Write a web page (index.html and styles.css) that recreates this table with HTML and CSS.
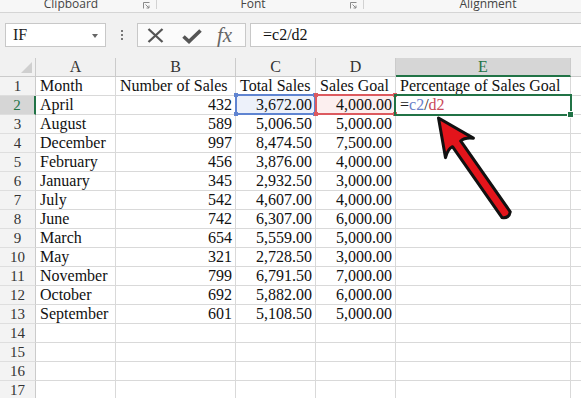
FILE: index.html
```html
<!DOCTYPE html>
<html>
<head>
<meta charset="utf-8">
<link rel="stylesheet" href="styles.css">
</head>
<body>
<div class="ribbon">
  <div class="grp g1"><span class="lbl">Clipboard</span><svg class="launch" width="7" height="7" viewBox="0 0 7 7"><path d="M0.5 6.5V0.5H6.5" fill="none" stroke="#8a8a8a"/><path d="M2.5 2.5L6 6M6 3.5V6H3.5" fill="none" stroke="#8a8a8a"/></svg></div>
  <div class="grp g2"><span class="lbl">Font</span><svg class="launch" width="7" height="7" viewBox="0 0 7 7"><path d="M0.5 6.5V0.5H6.5" fill="none" stroke="#8a8a8a"/><path d="M2.5 2.5L6 6M6 3.5V6H3.5" fill="none" stroke="#8a8a8a"/></svg></div>
  <div class="grp g3"><span class="lbl">Alignment</span></div>
</div>
<div class="fbar">
  <div class="namebox"><span>IF</span><span class="caret"></span></div>
  <div class="dots"><i></i><i></i><i></i></div>
  <div class="fxbox">
    <svg class="ic-x" width="17" height="15" viewBox="0 0 17 15"><path d="M1.5 1L15.5 14M15.5 1L1.5 14" stroke="#555" stroke-width="2.3" fill="none"/></svg>
    <svg class="ic-ok" width="20" height="15" viewBox="0 0 20 15"><path d="M1.5 7.5L7 12.5L18.5 1.5" stroke="#555" stroke-width="3.6" fill="none"/></svg>
    <span class="fx">fx</span>
  </div>
  <div class="finput">=c2/d2</div>
</div>
<div class="sheet">
  <div class="c h corner"><span class="tri"></span></div><div class="c h">A</div><div class="c h">B</div><div class="c h">C</div><div class="c h">D</div><div class="c h sel-col">E</div><div class="c h"></div>
  <div class="c rh">1</div><div class="c">Month</div><div class="c">Number of Sales</div><div class="c">Total Sales</div><div class="c">Sales Goal</div><div class="c">Percentage of Sales Goal</div><div class="c"></div>
  <div class="c rh sel-row">2</div><div class="c">April</div><div class="c n">432</div><div class="c n ref-c">3,672.00</div><div class="c n ref-d">4,000.00</div><div class="c formula">=<span class="fc">c2</span>/<span class="fd">d2</span></div><div class="c"></div>
  <div class="c rh">3</div><div class="c">August</div><div class="c n">589</div><div class="c n">5,006.50</div><div class="c n">5,000.00</div><div class="c"></div><div class="c"></div>
  <div class="c rh">4</div><div class="c">December</div><div class="c n">997</div><div class="c n">8,474.50</div><div class="c n">7,500.00</div><div class="c"></div><div class="c"></div>
  <div class="c rh">5</div><div class="c">February</div><div class="c n">456</div><div class="c n">3,876.00</div><div class="c n">4,000.00</div><div class="c"></div><div class="c"></div>
  <div class="c rh">6</div><div class="c">January</div><div class="c n">345</div><div class="c n">2,932.50</div><div class="c n">3,000.00</div><div class="c"></div><div class="c"></div>
  <div class="c rh">7</div><div class="c">July</div><div class="c n">542</div><div class="c n">4,607.00</div><div class="c n">4,000.00</div><div class="c"></div><div class="c"></div>
  <div class="c rh">8</div><div class="c">June</div><div class="c n">742</div><div class="c n">6,307.00</div><div class="c n">6,000.00</div><div class="c"></div><div class="c"></div>
  <div class="c rh">9</div><div class="c">March</div><div class="c n">654</div><div class="c n">5,559.00</div><div class="c n">5,000.00</div><div class="c"></div><div class="c"></div>
  <div class="c rh">10</div><div class="c">May</div><div class="c n">321</div><div class="c n">2,728.50</div><div class="c n">3,000.00</div><div class="c"></div><div class="c"></div>
  <div class="c rh">11</div><div class="c">November</div><div class="c n">799</div><div class="c n">6,791.50</div><div class="c n">7,000.00</div><div class="c"></div><div class="c"></div>
  <div class="c rh">12</div><div class="c">October</div><div class="c n">692</div><div class="c n">5,882.00</div><div class="c n">6,000.00</div><div class="c"></div><div class="c"></div>
  <div class="c rh">13</div><div class="c">September</div><div class="c n">601</div><div class="c n">5,108.50</div><div class="c n">5,000.00</div><div class="c"></div><div class="c"></div>
  <div class="c rh">14</div><div class="c"></div><div class="c"></div><div class="c"></div><div class="c"></div><div class="c"></div><div class="c"></div>
  <div class="c rh">15</div><div class="c"></div><div class="c"></div><div class="c"></div><div class="c"></div><div class="c"></div><div class="c"></div>
  <div class="c rh">16</div><div class="c"></div><div class="c"></div><div class="c"></div><div class="c"></div><div class="c"></div><div class="c"></div>
  <div class="c rh">17</div><div class="c"></div><div class="c"></div><div class="c"></div><div class="c"></div><div class="c"></div><div class="c"></div>

  <div class="hl hl-c"><i class="k tl"></i><i class="k tr"></i><i class="k bl"></i><i class="k br"></i></div>
  <div class="hl hl-d"><i class="k tl"></i><i class="k tr"></i><i class="k bl"></i><i class="k br"></i></div>
  <div class="hl hl-e"><i class="handle"></i></div>
</div>
<svg class="arrow" width="581" height="398" viewBox="0 0 581 398">
  <g transform="translate(438.5 118) rotate(-35)">
    <path d="M0 0 L17 36.5 Q10 30.5 5 31.5 L5 118 Q0 123 -5 118 L-5 31.5 Q-10 30.5 -17 36.5 Z" fill="#e3141b" stroke="#111" stroke-width="3" stroke-linejoin="round"/>
  </g>
</svg>
</body>
</html>
```
FILE: styles.css
```css
html, body {
  margin: 0;
  padding: 0;
}
body {
  width: 581px;
  height: 398px;
  overflow: hidden;
  position: relative;
  background: #ffffff;
  font-family: "Liberation Serif", serif;
}

/* ribbon labels strip */
.ribbon {
  display: flex;
  height: 13px;
  box-sizing: border-box;
  background: #f7f7f7;
  border-bottom: 1px solid #d5d5d5;
  overflow: hidden;
  font-family: "Open Sans", sans-serif;
  font-size: 12px;
  color: #444;
}
.grp {
  flex: none;
  display: flex;
  align-items: flex-start;
  height: 9px;
  box-sizing: border-box;
  border-right: 1px solid #d2d2d2;
}
.g1 { width: 157px; }
.g2 { width: 207px; }
.g3 { width: 248px; border-right: none; }
.lbl {
  flex: 1;
  text-align: center;
  line-height: 12px;
  margin-top: -2px;
  white-space: nowrap;
}
.launch {
  flex: none;
  margin: 2px 6px 0 1px;
}

/* formula bar */
.fbar {
  display: flex;
  align-items: flex-start;
  height: 45px;
  box-sizing: border-box;
  padding-top: 10px;
  background: #f1f1f1;
}
.namebox {
  flex: none;
  margin-left: 5px;
  width: 101px;
  height: 24px;
  box-sizing: border-box;
  border: 1px solid #c8c8c8;
  background: #fff;
  display: flex;
  align-items: center;
  justify-content: space-between;
  padding: 0 7px 0 7px;
  font-size: 16px;
  line-height: 22px;
  color: #222;
}
.caret {
  width: 0;
  height: 0;
  border-left: 3.5px solid transparent;
  border-right: 3.5px solid transparent;
  border-top: 4px solid #666;
  margin-top: 1px;
}
.dots {
  flex: none;
  width: 31px;
  height: 24px;
  display: flex;
  flex-direction: column;
  align-items: center;
  justify-content: center;
  gap: 2px;
}
.dots i {
  display: block;
  width: 2px;
  height: 2px;
  background: #777;
}
.fxbox {
  flex: none;
  width: 109px;
  height: 24px;
  box-sizing: border-box;
  border: 1px solid #c8c8c8;
  background: #fbfbfb;
  display: flex;
  align-items: center;
}
.ic-x { margin-left: 9px; margin-top: 1px; }
.ic-ok { margin-left: 18px; margin-top: 3px; }
.fx {
  margin-left: 15px;
  font-family: "Liberation Serif", serif;
  font-style: italic;
  font-size: 21px;
  line-height: 22px;
  color: #666;
}
.finput {
  flex: 1;
  margin-left: 4px;
  height: 24px;
  box-sizing: border-box;
  border: 1px solid #c8c8c8;
  border-right: none;
  background: #fff;
  padding-left: 12px;
  font-size: 16px;
  line-height: 21px;
  color: #111;
}

/* sheet grid */
.sheet {
  position: relative;
  display: grid;
  grid-template-columns: 36px 80px 120px 80px 80px 175px 20px;
  grid-auto-rows: 19px;
}
.c {
  box-sizing: border-box;
  border-right: 1px solid #d9d9d9;
  border-bottom: 1px solid #d9d9d9;
  padding: 0 3px 0 4px;
  font-size: 16px;
  line-height: 18px;
  white-space: nowrap;
  overflow: hidden;
  color: #111;
}
.n { text-align: right; }
.h {
  background: #f1f1f1;
  border-right-color: #cbcbcb;
  border-bottom-color: #cbcbcb;
  text-align: center;
  color: #333;
  padding: 0;
}
.rh {
  background: #f3f3f3;
  border-right-color: #cbcbcb;
  border-bottom-color: #dedede;
  text-align: center;
  font-size: 15px;
  color: #333;
  padding: 0;
}
.corner {
  display: flex;
  justify-content: flex-end;
  align-items: flex-end;
}
.tri {
  width: 0;
  height: 0;
  border-left: 11px solid transparent;
  border-bottom: 11px solid #cfcfcf;
  margin: 0 3px 3px 0;
}
.sel-col {
  background: #d6d6d6;
  color: #217346;
  border-bottom: 2px solid #217346;
}
.sel-row {
  background: #d6d6d6;
  color: #217346;
  border-right: 2px solid #217346;
}
.ref-c { background: #edf1fa; }
.ref-d { background: #fcefef; }
.formula { color: #222; }
.fc { color: #6a80c8; }
.fd { color: #c9485a; }

/* range highlight overlays */
.hl {
  position: absolute;
  box-sizing: border-box;
  border: 2px solid;
}
.hl-c { left: 235px; top: 36px; width: 81px; height: 21px; border-color: #5f84d1; }
.hl-d { left: 315px; top: 36px; width: 81px; height: 21px; border-color: #dc5a5f; }
.hl-e { left: 394px; top: 36px; width: 178px; height: 22px; border-color: #217346; }
.k {
  position: absolute;
  width: 4px;
  height: 4px;
}
.hl-c .k { background: #5f84d1; }
.hl-d .k { background: #dc5a5f; }
.tl { left: -3px; top: -3px; }
.tr { right: -3px; top: -3px; }
.bl { left: -3px; bottom: -3px; }
.br { right: -3px; bottom: -3px; }
.handle {
  position: absolute;
  right: -4px;
  bottom: -4px;
  width: 5px;
  height: 5px;
  background: #217346;
  border: 1px solid #fff;
}

.arrow {
  position: absolute;
  left: 0;
  top: 0;
  pointer-events: none;
}
```
